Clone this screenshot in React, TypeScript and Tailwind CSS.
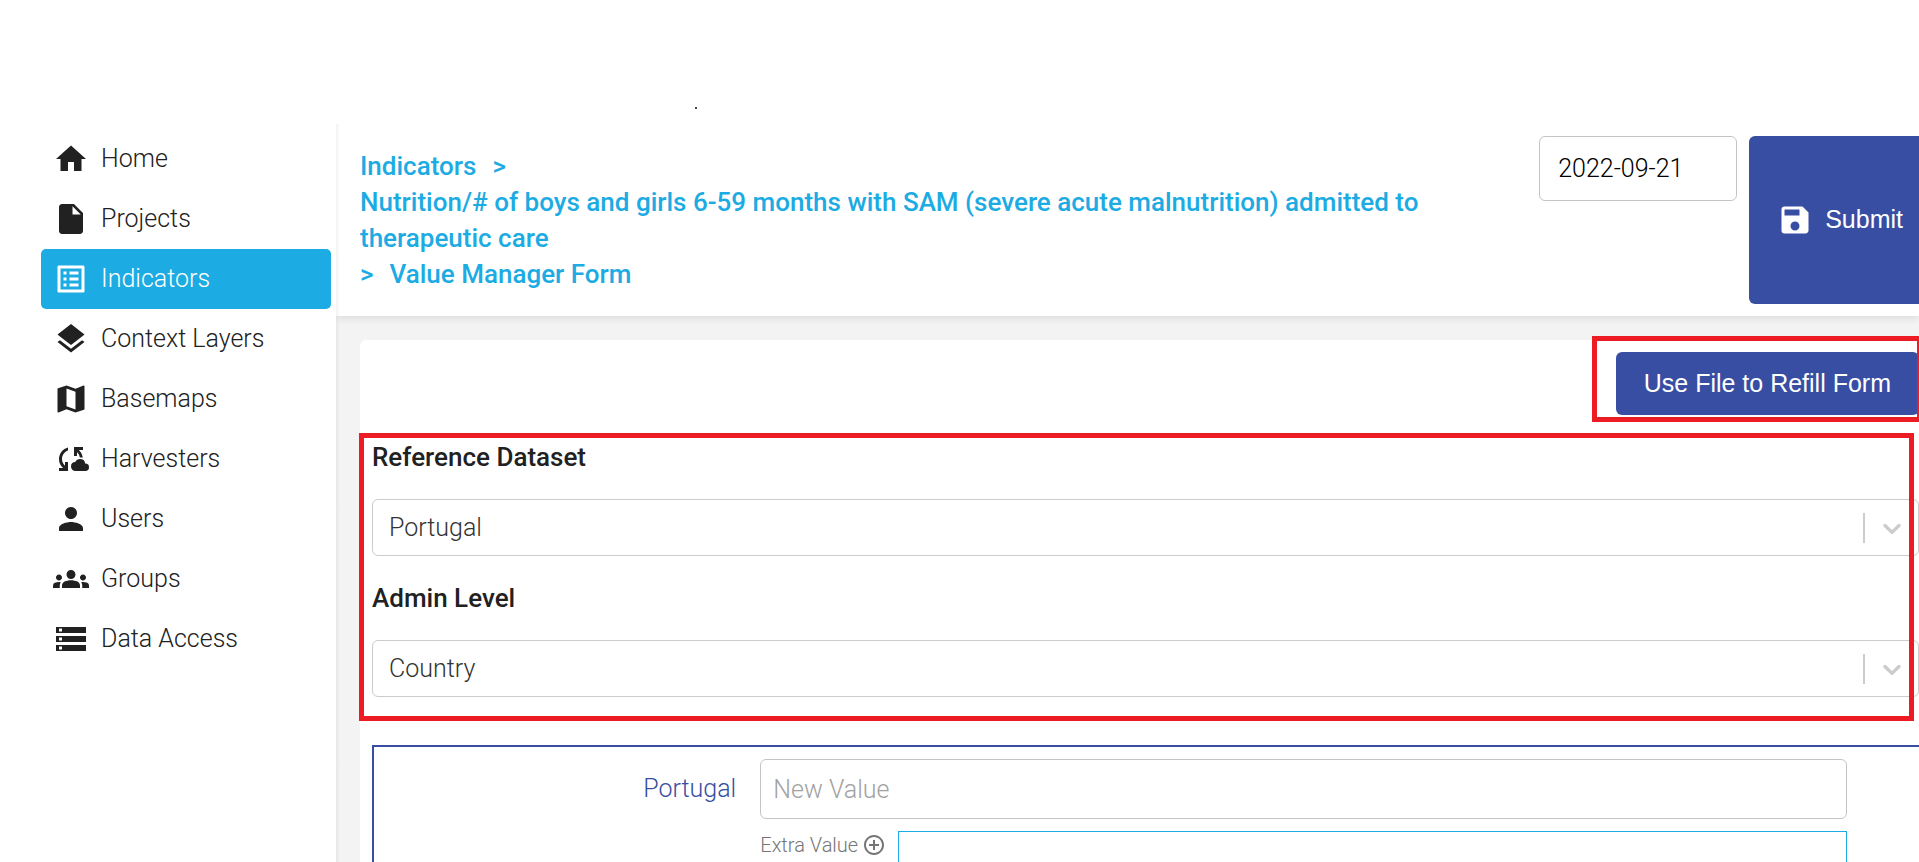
import type { ReactNode } from "react";
import {
  MdAddCircleOutline,
  MdCloudSync,
  MdGroups,
  MdHome,
  MdInsertDriveFile,
  MdLayers,
  MdListAlt,
  MdMap,
  MdPerson,
  MdSave,
  MdStorage,
} from "react-icons/md";

const navItems = [
  { label: "Home", icon: MdHome },
  { label: "Projects", icon: MdInsertDriveFile },
  { label: "Indicators", icon: MdListAlt, active: true },
  { label: "Context Layers", icon: MdLayers },
  { label: "Basemaps", icon: MdMap },
  { label: "Harvesters", icon: MdCloudSync },
  { label: "Users", icon: MdPerson },
  { label: "Groups", icon: MdGroups },
  { label: "Data Access", icon: MdStorage },
];

function Sidebar() {
  return (
    <nav className="w-[300px] shrink-0 p-[5px]">
      <ul>
        {navItems.map(({ label, icon: Icon, active }) => (
          <li key={label}>
            <a
              href="#"
              className={`flex h-[60px] items-center gap-3 rounded-[5px] px-3 text-[25px] font-light ${
                active ? "bg-[#1cabe2] text-white" : "text-[#212121]"
              }`}
            >
              <Icon className="size-9 shrink-0" />
              {label}
            </a>
          </li>
        ))}
      </ul>
    </nav>
  );
}

function Header() {
  return (
    <header className="relative flex items-start gap-3 bg-white pt-3 pb-3 pl-6 shadow-[0_2px_8px_rgba(0,0,0,0.1)]">
      <div className="flex-1 self-center pr-16 text-[26px] leading-9 font-medium text-[#1cabe2]">
        <div className="flex gap-4">
          <a href="#">Indicators</a>
          <span>&gt;</span>
        </div>
        <a href="#" className="block">
          Nutrition/# of boys and girls 6-59 months with SAM (severe acute malnutrition) admitted to
          therapeutic care
        </a>
        <div className="flex gap-4">
          <span>&gt;</span>
          <a href="#">Value Manager Form</a>
        </div>
      </div>
      <input
        type="text"
        aria-label="Date"
        defaultValue="2022-09-21"
        className="h-[65px] w-[198px] rounded-[6px] border border-[#c4c4c4] px-[18px] text-[25px] font-light text-black"
      />
      <button
        type="button"
        className="flex h-[168px] items-center gap-3 rounded-l-[6px] bg-[#374ea2] pr-4 pl-7 font-['Liberation_Sans',Arial,sans-serif] text-[25px] text-white"
      >
        <MdSave className="size-9" />
        Submit
      </button>
    </header>
  );
}

function SelectField({ id, label, value }: { id: string; label: string; value: string }) {
  return (
    <div className="flex flex-col gap-6">
      <label htmlFor={id} className="text-[26px] leading-9 font-medium text-[#212121]">
        {label}
      </label>
      <div className="relative">
        <select
          id={id}
          defaultValue={value}
          className="block h-[57px] w-full appearance-none rounded-[6px] border border-[#cccccc] bg-white px-4 text-[25px] font-light text-[#333333]"
        >
          <option>{value}</option>
        </select>
        <div className="pointer-events-none absolute inset-y-0 right-0 flex items-center gap-3 pr-3">
          <span className="h-[30px] w-[2px] bg-[#cccccc]" />
          <svg viewBox="0 0 20 20" className="size-[30px] fill-[#cccccc]" aria-hidden="true">
            <path d="M4.516 7.548c0.436-0.446 1.043-0.481 1.576 0l3.908 3.747 3.908-3.747c0.533-0.481 1.141-0.446 1.574 0 0.436 0.445 0.408 1.197 0 1.615-0.406 0.418-4.695 4.502-4.695 4.502-0.217 0.223-0.502 0.335-0.787 0.335s-0.57-0.112-0.789-0.335c0 0-4.287-4.084-4.695-4.502s-0.436-1.17 0-1.615z" />
          </svg>
        </div>
      </div>
    </div>
  );
}

function Highlight({ className, children }: { className: string; children: ReactNode }) {
  return (
    <div className="relative">
      {children}
      <div className={`pointer-events-none absolute border-[5px] border-[#ed1c24] ${className}`} />
    </div>
  );
}

function ValueForm() {
  return (
    <section className="mt-12 grid min-h-[240px] grid-cols-[1fr_3fr] content-start gap-x-6 gap-y-3 border-t-2 border-l-2 border-[#374ea2] pt-3 pr-[72px]">
      <label
        htmlFor="value"
        className="self-center text-right text-[25px] leading-9 font-light text-[#374ea2]"
      >
        Portugal
      </label>
      <input
        id="value"
        type="text"
        placeholder="New Value"
        className="h-[60px] w-full rounded-[6px] border border-[#c4c4c4] px-3 text-[25px] font-light placeholder:text-[#a2a2a2]"
      />
      <div className="col-start-2 flex items-start gap-3">
        <div className="flex items-center gap-1 text-[20px] leading-7 font-light text-[#757575]">
          <span>Extra Value</span>
          <button type="button" aria-label="Add extra value">
            <MdAddCircleOutline className="size-6" />
          </button>
        </div>
        <textarea
          aria-label="Extra values"
          className="h-[120px] flex-1 resize-none border border-[#1cabe2]"
        />
      </div>
    </section>
  );
}

export default function App() {
  return (
    <div className="flex h-screen flex-col overflow-hidden bg-white font-[Roboto,sans-serif]">
      <div className="flex h-[124px] shrink-0 items-end pb-[15px] pl-[695px]">
        <span className="size-[2px] bg-[#444444]" />
      </div>
      <div className="flex min-h-0 flex-1 pl-9">
        <Sidebar />
        <main className="relative flex min-w-0 flex-1 flex-col overflow-hidden bg-[#f3f3f3]">
          <Header />
          <div className="mt-6 ml-6 rounded-tl-[6px] bg-white pt-3 pb-6 pl-3">
            <div className="flex justify-end">
              <Highlight className="-top-4 -right-[3px] -bottom-[7px] -left-6">
                <button
                  type="button"
                  className="h-[63px] rounded-[6px] bg-[#374ea2] px-7 font-['Liberation_Sans',Arial,sans-serif] text-[25px] text-white"
                >
                  Use File to Refill Form
                </button>
              </Highlight>
            </div>
            <div className="mt-6">
              <Highlight className="-top-[6px] right-[5px] -bottom-6 -left-[13px]">
                <div className="flex flex-col gap-6">
                  <SelectField id="dataset" label="Reference Dataset" value="Portugal" />
                  <SelectField id="level" label="Admin Level" value="Country" />
                </div>
              </Highlight>
            </div>
            <ValueForm />
          </div>
          <div className="pointer-events-none absolute inset-y-0 left-0 w-1 bg-linear-to-r from-black/5 to-transparent" />
        </main>
      </div>
    </div>
  );
}
